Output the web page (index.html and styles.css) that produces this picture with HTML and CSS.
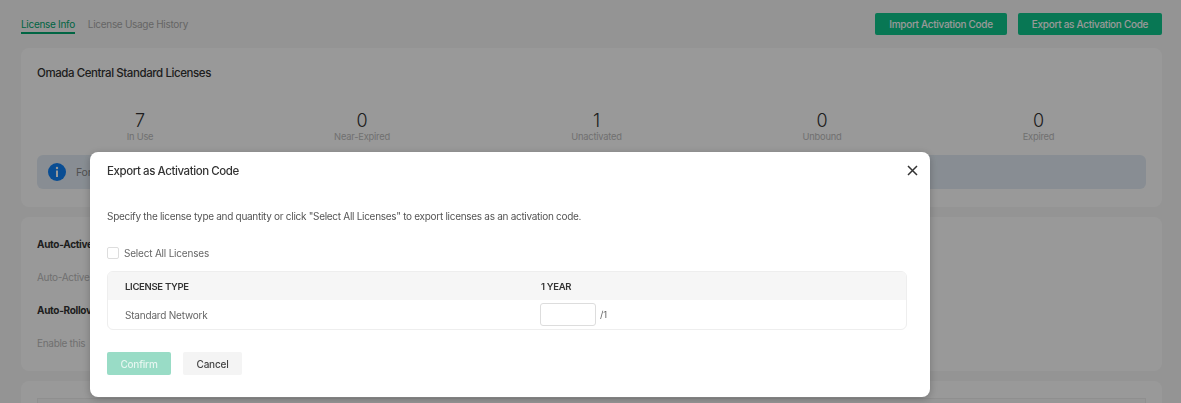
FILE: index.html
```html
<!DOCTYPE html>
<html lang="en">
<head>
    <meta charset="UTF-8">
    <title>License</title>
    <link rel="stylesheet" href="styles.css">
</head>
<body>
    <div class="page">
        <div class="topbar">
            <div class="tabs">
                <span class="tab active">License Info</span>
                <span class="tab">License Usage History</span>
            </div>
            <div class="actions">
                <button class="btn-green import">Import Activation Code</button>
                <button class="btn-green export">Export as Activation Code</button>
            </div>
        </div>

        <div class="card summary">
            <h2>Omada Central Standard Licenses</h2>
            <div class="stats">
                <div class="stat"><b>7</b><span>In Use</span></div>
                <div class="stat"><b>0</b><span>Near-Expired</span></div>
                <div class="stat"><b>1</b><span>Unactivated</span></div>
                <div class="stat"><b>0</b><span>Unbound</span></div>
                <div class="stat"><b>0</b><span>Expired</span></div>
            </div>
            <div class="banner">
                <svg class="info-icon" width="18" height="18" viewBox="0 0 18 18">
                    <circle cx="9" cy="9" r="9" fill="#1080f5"/>
                    <circle cx="9" cy="5" r="1.2" fill="#fff"/>
                    <rect x="8" y="7.5" width="2" height="6.5" fill="#fff"/>
                </svg>
                <span>For</span>
            </div>
        </div>

        <div class="card options">
            <h3>Auto-Active</h3>
            <p>Auto-Active</p>
            <h3>Auto-Rollov</h3>
            <p>Enable this</p>
        </div>

        <div class="card last">
            <div class="last-inner"></div>
        </div>
    </div>

    <div class="overlay"></div>

    <div class="modal">
        <div class="modal-head">
            <h1>Export as Activation Code</h1>
            <svg class="close" width="11" height="11" viewBox="0 0 11 11">
                <path d="M1 1L10 10M10 1L1 10" stroke="#333" stroke-width="1.5" fill="none"/>
            </svg>
        </div>
        <p class="desc">Specify the license type and quantity or click "Select All Licenses" to export licenses as an activation code.</p>
        <label class="check"><span class="box"></span>Select All Licenses</label>
        <div class="table">
            <div class="row head">
                <div class="col-type">LICENSE TYPE</div>
                <div class="col-year">1 YEAR</div>
            </div>
            <div class="row">
                <div class="col-type">Standard Network</div>
                <div class="col-year"><span class="qty"></span><span class="total">/1</span></div>
            </div>
        </div>
        <div class="modal-foot">
            <button class="btn-confirm">Confirm</button>
            <button class="btn-cancel">Cancel</button>
        </div>
    </div>
</body>
</html>
```

FILE: styles.css
```css
html, body {
    margin: 0;
    height: 100%;
    overflow: hidden;
}
body {
    font-family: Inter, "Noto Sans", sans-serif;
    background: #f7f7f7;
    color: #333;
    letter-spacing: -0.2px;
}
.page {
    padding: 13px 19px 0 21px;
}
.topbar {
    display: flex;
    justify-content: space-between;
    align-items: center;
    height: 22px;
}
.tabs {
    display: flex;
    gap: 13px;
    font-size: 10px;
    letter-spacing: -0.3px;
}
.tab {
    color: #aaa;
    padding: 4px 0 2px;
    border-bottom: 2px solid transparent;
}
.tab.active {
    color: #00a870;
    border-bottom-color: #00a870;
}
.actions {
    display: flex;
    gap: 11px;
}
.btn-green {
    height: 22px;
    padding: 0;
    border: none;
    border-radius: 2px;
    background: #0ec68c;
    color: #fff;
    font: 500 10px Inter, sans-serif;
    letter-spacing: -0.3px;
}
.import {
    width: 132px;
}
.export {
    width: 144px;
}
.card {
    background: #fff;
    border-radius: 8px;
    margin-top: 10px;
    padding: 0 16px;
}
.summary {
    height: 159px;
    margin-top: 13px;
    padding-top: 18px;
    box-sizing: border-box;
}
h2 {
    margin: 0;
    font-size: 11.5px;
    line-height: 14px;
    font-weight: 500;
    letter-spacing: -0.42px;
}
.stats {
    display: grid;
    grid-template-columns: 206px 238px 231px 220px 213px;
    margin-top: 31px;
    text-align: center;
}
.stat b {
    display: block;
    font-size: 18px;
    line-height: 20px;
    font-weight: 300;
}
.stat span {
    display: block;
    font-size: 9.3px;
    line-height: 11px;
    color: #bbb;
}
.banner {
    display: flex;
    align-items: center;
    gap: 10px;
    height: 34px;
    margin-top: 13px;
    padding: 0 11px;
    border-radius: 6px;
    background: #e3ecf5;
    font-size: 10.5px;
    color: #888;
}
.options {
    height: 154px;
    padding-top: 21px;
    box-sizing: border-box;
}
h3 {
    margin: 0;
    font-size: 10px;
    line-height: 12px;
    font-weight: 700;
    letter-spacing: -0.3px;
}
.options p {
    margin: 21px 0;
    font-size: 10px;
    line-height: 12px;
    color: #bbb;
    letter-spacing: -0.3px;
}
.last {
    height: 22px;
    padding-top: 17px;
    border-radius: 8px 8px 0 0;
    box-sizing: border-box;
    overflow: hidden;
}
.last-inner {
    height: 5px;
    background: #fafafa;
    border: 1px solid #eee;
    border-bottom: none;
}
.overlay {
    position: fixed;
    inset: 0;
    background: rgba(0, 0, 0, 0.4);
}
.modal {
    position: fixed;
    left: 90px;
    top: 152px;
    width: 840px;
    height: 245px;
    box-sizing: border-box;
    padding: 0 23px 0 17px;
    background: #fff;
    border-radius: 8px;
    box-shadow: 0 2px 8px rgba(0, 0, 0, 0.25);
}
.modal-head {
    display: flex;
    justify-content: space-between;
    align-items: center;
    height: 37px;
}
h1 {
    margin: 0;
    font-size: 11.5px;
    font-weight: 500;
    letter-spacing: -0.42px;
}
.close {
    margin-right: -11px;
}
.desc {
    margin: 20px 0 0;
    font-size: 10px;
    line-height: 14px;
    color: #555;
    letter-spacing: -0.29px;
}
.check {
    display: flex;
    align-items: center;
    gap: 5px;
    margin-top: 23px;
    font-size: 10px;
    line-height: 14px;
    color: #666;
    letter-spacing: -0.2px;
}
.box {
    width: 10px;
    height: 10px;
    border: 1px solid #ddd;
    border-radius: 2px;
}
.table {
    margin-top: 11px;
    border: 1px solid #eee;
    border-radius: 6px;
    overflow: hidden;
}
.row {
    display: flex;
    align-items: center;
    height: 29px;
    font-size: 10px;
    color: #666;
}
.row.head {
    height: 28px;
    background: #f6f6f6;
    font-weight: 600;
    font-size: 9.5px;
    color: #333;
    letter-spacing: -0.3px;
}
.col-type {
    width: 416px;
    padding-left: 17px;
}
.col-year {
    display: flex;
    align-items: center;
    gap: 4px;
}
.qty {
    width: 54px;
    height: 21px;
    margin-left: -1px;
    border: 1px solid #ddd;
    border-radius: 3px;
}
.total {
    font-size: 9.5px;
}
.modal-foot {
    display: flex;
    gap: 12px;
    margin-top: 22px;
}
.modal-foot button {
    height: 23px;
    border: none;
    border-radius: 2px;
    font: 500 10px Inter, sans-serif;
    letter-spacing: -0.2px;
}
.btn-confirm {
    width: 64px;
    background: #99dcc6;
    color: #e6f6f0;
}
.btn-cancel {
    width: 59px;
    background: #f4f4f4;
    color: #444;
}
```
